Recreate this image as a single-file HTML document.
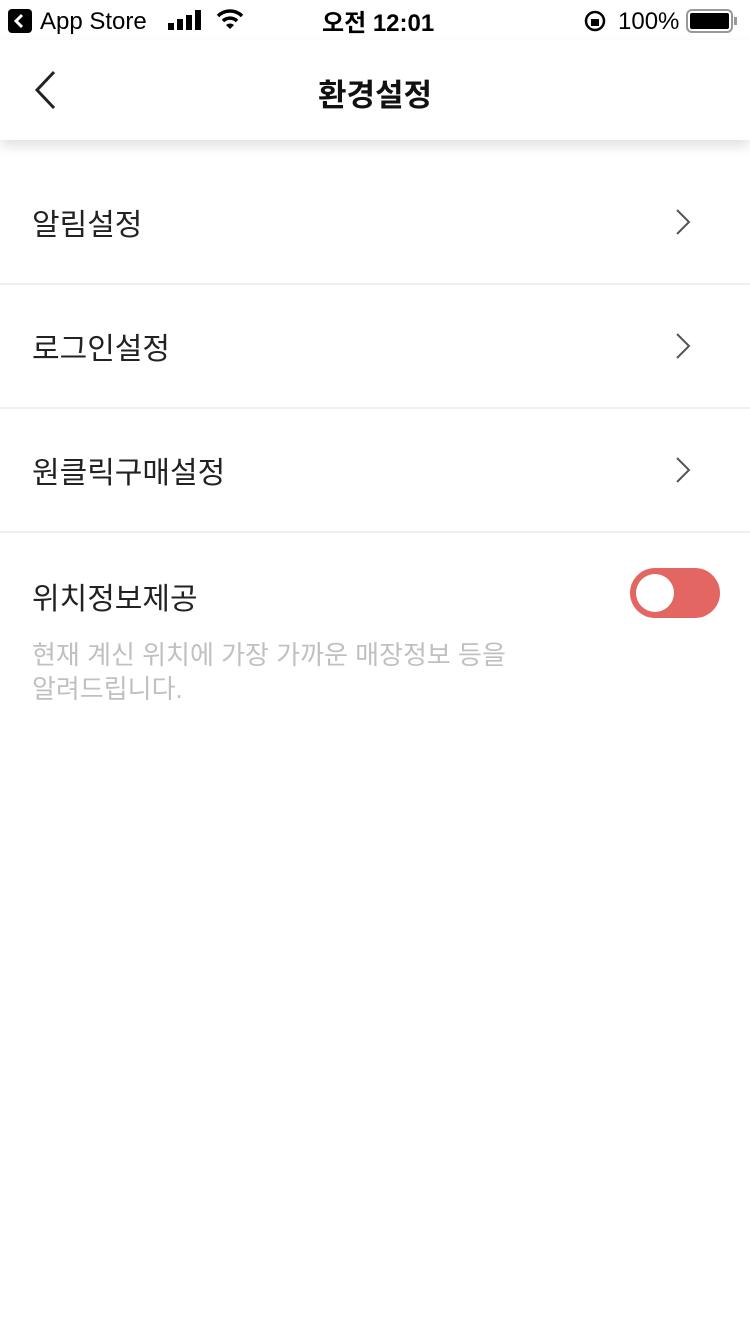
<!DOCTYPE html>
<html><head><meta charset="utf-8"><style>
body{margin:0;width:750px;height:1334px;background:#fff;font-family:"Liberation Sans","Noto Sans CJK KR",sans-serif;position:relative;overflow:hidden}
.sb{position:absolute;top:0;left:0;width:750px;height:40px;font-size:24px;color:#000}
.sb span{position:absolute;top:8px}
.nav{position:absolute;top:40px;left:0;width:750px;height:100px;background:#fff;box-shadow:0 6px 12px rgba(0,0,0,0.12)}
.title{position:absolute;left:0;right:0;top:30px;text-align:center;font-size:31px;font-weight:bold;color:#111}
.row{position:absolute;left:0;width:750px;height:123px;border-bottom:2px solid #f0f0f0}
.row .t{position:absolute;left:32px;top:40px;font-size:30px;color:#222}
.chev{position:absolute;left:674px;top:48px}
.desc{position:absolute;left:32px;top:638px;font-size:26px;line-height:34px;color:#c0c0c0}
.tog{position:absolute;left:630px;top:568px;width:90px;height:50px;border-radius:25px;background:#e46663}
.knob{position:absolute;left:636px;top:574px;width:38px;height:38px;border-radius:50%;background:#fff}
</style></head><body>
<div class="sb">
<svg style="position:absolute;left:8px;top:9px" width="24" height="24"><rect width="24" height="24" rx="4" fill="#000"/><path d="M14 6 L8 12 L14 18" stroke="#fff" stroke-width="3" fill="none"/></svg>
<span style="left:40px">App Store</span>
<svg style="position:absolute;left:168px;top:10px" width="34" height="20"><rect x="0" y="13" width="6" height="7" fill="#000"/><rect x="9" y="9" width="6" height="11" fill="#000"/><rect x="18" y="5" width="6" height="15" fill="#000"/><rect x="27" y="0" width="6" height="20" fill="#000"/></svg>
<svg style="position:absolute;left:216px;top:8px" width="28" height="22"><path d="M2 8 A17 17 0 0 1 26 8" stroke="#000" stroke-width="3.5" fill="none"/><path d="M7 13 A10 10 0 0 1 21 13" stroke="#000" stroke-width="3.5" fill="none"/><path d="M10 17 L14 21 L18 17 A6 6 0 0 0 10 17Z" fill="#000"/></svg>
<span style="left:322px;top:3px;font-weight:bold">오전 12:01</span>
<svg style="position:absolute;left:583px;top:9px" width="24" height="24"><circle cx="12" cy="12" r="9" stroke="#000" stroke-width="2.5" fill="none"/><rect x="8" y="10" width="8" height="7" fill="#000"/></svg>
<span style="left:618px">100%</span>
<svg style="position:absolute;left:686px;top:9px" width="52" height="24"><rect x="1" y="1" width="45" height="22" rx="5" stroke="#999" stroke-width="2" fill="none"/><rect x="4" y="4" width="39" height="16" rx="2" fill="#000"/><rect x="48" y="8" width="3" height="8" fill="#999"/></svg>
</div>
<div class="nav">
<svg style="position:absolute;left:32px;top:30px" width="26" height="40"><path d="M22 2 L5 20 L22 38" stroke="#222" stroke-width="3" fill="none"/></svg>
<div class="title">환경설정</div>
</div>
<div class="row" style="top:160px"><div class="t">알림설정</div><svg class="chev" width="18" height="28"><path d="M3 2 L15 14 L3 26" stroke="#555" stroke-width="2" fill="none"/></svg></div>
<div class="row" style="top:284px"><div class="t">로그인설정</div><svg class="chev" width="18" height="28"><path d="M3 2 L15 14 L3 26" stroke="#555" stroke-width="2" fill="none"/></svg></div>
<div class="row" style="top:408px"><div class="t">원클릭구매설정</div><svg class="chev" width="18" height="28"><path d="M3 2 L15 14 L3 26" stroke="#555" stroke-width="2" fill="none"/></svg></div>
<div style="position:absolute;left:32px;top:574px;font-size:30px;color:#222">위치정보제공</div>
<div class="tog"></div><div class="knob"></div>
<div class="desc">현재 계신 위치에 가장 가까운 매장정보 등을<br>알려드립니다.</div>
</body></html>
